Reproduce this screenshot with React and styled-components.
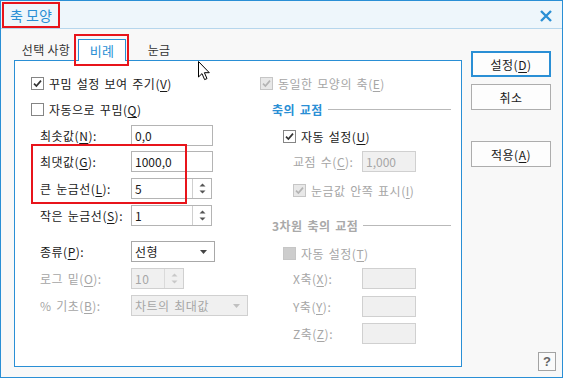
import styled, { createGlobalStyle } from 'styled-components';

const BLUE = '#2a8fd5';
const DIS = '#a6a6a6';

const GlobalStyle = createGlobalStyle`
  body {
    margin: 0;
    background: #ffffff;
  }
`;

function CheckMark({ color }) {
  return (
    <svg width="9" height="9" viewBox="0 0 9 9">
      <path d="M1 4.6 L3.4 7 L8 1.6" fill="none" stroke={color} strokeWidth="1.7" />
    </svg>
  );
}

function Check({ checked, disabled, indent, h, children }) {
  return (
    <Row $h={h} $indent={indent}>
      <Box $checked={checked} $disabled={disabled}>
        {checked && <CheckMark color={disabled ? '#b4b4b4' : '#333'} />}
      </Box>
      <CheckText $disabled={disabled}>{children}</CheckText>
    </Row>
  );
}

function Spinner({ disabled }) {
  const c = disabled ? '#c8c8c8' : '#555';
  return (
    <SpinButtons $disabled={disabled}>
      <svg width="7" height="4" viewBox="0 0 7 4">
        <path d="M0.5 3.5 L3.5 0.5 L6.5 3.5 Z" fill={c} />
      </svg>
      <svg width="7" height="4" viewBox="0 0 7 4">
        <path d="M0.5 0.5 L3.5 3.5 L6.5 0.5 Z" fill={c} />
      </svg>
    </SpinButtons>
  );
}

function DropArrow({ disabled }) {
  return (
    <svg width="7" height="4" viewBox="0 0 7 4">
      <path d="M0 0 L3.5 4 L7 0 Z" fill={disabled ? '#c0c0c0' : '#444'} />
    </svg>
  );
}

export default function App() {
  return (
    <>
      <GlobalStyle />
      <Window>
        <TitleBar>
          <Title>축 모양</Title>
          <svg width="12" height="12" viewBox="0 0 12 12">
            <path d="M1 1 L11 11 M11 1 L1 11" stroke={BLUE} strokeWidth="2.4" />
          </svg>
        </TitleBar>
        <Body>
          <LeftArea>
            <TabStrip>
              <Tab $w={64}>선택 사항</Tab>
              <Tab $w={48} $active>비례</Tab>
              <Tab $w={66}>눈금</Tab>
            </TabStrip>
            <Panel>
              <LeftCol>
                <Check checked h={27}>
                  꾸밈 설정 보여 주기(<u>V</u>)
                </Check>
                <Check h={25}>
                  자동으로 꾸밈(<u>Q</u>)
                </Check>
                <Row $h={26} $indent={9}>
                  <Label $w={91}>최솟값(<u>N</u>):</Label>
                  <TextBox $w={82}>0,0</TextBox>
                </Row>
                <Row $h={27} $indent={9}>
                  <Label $w={91}>최댓값(<u>G</u>):</Label>
                  <TextBox $w={82}>1000,0</TextBox>
                </Row>
                <Row $h={27} $indent={9}>
                  <Label $w={91}>큰 눈금선(<u>L</u>):</Label>
                  <SpinBox $w={81}>
                    <SpinText>5</SpinText>
                    <Spinner />
                  </SpinBox>
                </Row>
                <Row $h={27} $indent={9}>
                  <Label $w={91}>작은 눈금선(<u>S</u>):</Label>
                  <SpinBox $w={81}>
                    <SpinText>1</SpinText>
                    <Spinner />
                  </SpinBox>
                </Row>
                <Row $h={27} $indent={9} $gap={9}>
                  <Label $w={91}>종류(<u>P</u>):</Label>
                  <Select $w={84}>
                    <span>선형</span>
                    <DropArrow />
                  </Select>
                </Row>
                <Row $h={27} $indent={9}>
                  <Label $w={91} $disabled>로그 밑(<u>O</u>):</Label>
                  <SpinBox $w={53} $disabled>
                    <SpinText>10</SpinText>
                    <Spinner disabled />
                  </SpinBox>
                </Row>
                <Row $h={27} $indent={9}>
                  <Label $w={91} $disabled>% 기초(<u>B</u>):</Label>
                  <Select $w={117} $disabled>
                    <span>차트의 최대값</span>
                    <DropArrow disabled />
                  </Select>
                </Row>
              </LeftCol>
              <RightCol>
                <Check checked disabled h={27}>
                  동일한 모양의 축(<u>E</u>)
                </Check>
                <Section $h={25}>축의 교점</Section>
                <Check checked indent={23} h={28}>
                  자동 설정(<u>U</u>)
                </Check>
                <Row $h={22} $indent={33}>
                  <Label $w={69} $disabled>교점 수(<u>C</u>):</Label>
                  <TextBox $w={54} $disabled>1,000</TextBox>
                </Row>
                <Check checked disabled indent={33} h={36}>
                  눈금값 안쪽 표시(<u>I</u>)
                </Check>
                <Section $h={34} $disabled>3차원 축의 교점</Section>
                <Check disabled indent={23} h={22}>
                  자동 설정(<u>T</u>)
                </Check>
                <Row $h={29} $indent={33}>
                  <Label $w={69} $disabled>X축(<u>X</u>):</Label>
                  <TextBox $w={54} $disabled />
                </Row>
                <Row $h={27} $indent={33}>
                  <Label $w={69} $disabled>Y축(<u>Y</u>):</Label>
                  <TextBox $w={54} $disabled />
                </Row>
                <Row $h={27} $indent={33}>
                  <Label $w={69} $disabled>Z축(<u>Z</u>):</Label>
                  <TextBox $w={54} $disabled />
                </Row>
              </RightCol>
              <Highlight />
            </Panel>
          </LeftArea>
          <ButtonCol>
            <Button $default>설정(<u>D</u>)</Button>
            <Button>취소</Button>
            <Button $mt={31}>적용(<u>A</u>)</Button>
            <HelpButton>?</HelpButton>
          </ButtonCol>
        </Body>
        <Cursor width="13" height="20" viewBox="0 0 13 20">
          <path
            d="M0.5 0.5 L0.5 16 L4 12.6 L6.6 18.6 L9 17.6 L6.4 11.7 L11.3 11.7 Z"
            fill="#fff"
            stroke="#000"
            strokeWidth="1"
            strokeLinejoin="miter"
          />
        </Cursor>
      </Window>
    </>
  );
}

const Window = styled.div`
  position: relative;
  width: 563px;
  height: 378px;
  box-sizing: border-box;
  border: 1px solid ${BLUE};
  background: #f8f8f8;
  display: flex;
  flex-direction: column;
  font-family: 'Noto Sans CJK KR', 'Noto Sans', sans-serif;
  font-size: 12px;
  color: #1a1a1a;
  u {
    text-decoration-thickness: 1px;
    text-underline-offset: 2px;
  }
`;

const TitleBar = styled.div`
  height: 28px;
  flex: none;
  box-sizing: border-box;
  background: #eef6fb;
  border-bottom: 1px solid #b6d6ec;
  display: flex;
  align-items: flex-start;
  justify-content: space-between;
  padding: 1px 10px 0 1px;
  svg {
    margin-top: 8px;
  }
`;

const Title = styled.div`
  height: 26px;
  box-sizing: border-box;
  border: 2px solid #e8141b;
  padding: 0 6px;
  display: flex;
  align-items: center;
  color: ${BLUE};
  font-size: 14px;
`;

const Body = styled.div`
  flex: 1;
  display: flex;
  padding: 10px 0 0 13px;
`;

const LeftArea = styled.div`
  width: 448px;
  display: flex;
  flex-direction: column;
`;

const TabStrip = styled.div`
  height: 21px;
  display: flex;
  align-items: flex-end;
`;

const Tab = styled.div`
  position: relative;
  width: ${(p) => p.$w}px;
  height: ${(p) => (p.$active ? 22 : 21)}px;
  box-sizing: border-box;
  display: flex;
  align-items: center;
  justify-content: center;
  margin-bottom: ${(p) => (p.$active ? -1 : 0)}px;
  color: ${(p) => (p.$active ? BLUE : '#333')};
  font-size: ${(p) => (p.$active ? 13 : 12)}px;
  letter-spacing: 0.3px;
  background: ${(p) => (p.$active ? '#fff' : 'transparent')};
  border: ${(p) => (p.$active ? `1px solid ${BLUE}` : 'none')};
  border-bottom: none;
  z-index: ${(p) => (p.$active ? 1 : 0)};
  padding-bottom: 1px;
  &::after {
    content: '';
    display: ${(p) => (p.$active ? 'block' : 'none')};
    position: absolute;
    left: -5px;
    right: -4px;
    top: -6px;
    bottom: -5px;
    border: 2px solid #e8141b;
  }
`;

const Panel = styled.div`
  position: relative;
  height: 307px;
  box-sizing: border-box;
  background: #fff;
  border: 1px solid ${BLUE};
  display: flex;
  letter-spacing: 0.5px;
  word-spacing: 1.5px;
`;

const LeftCol = styled.div`
  width: 245px;
  box-sizing: border-box;
  padding: 9px 0 0 16px;
  display: flex;
  flex-direction: column;
`;

const RightCol = styled.div`
  flex: 1;
  padding: 9px 10px 0 0;
  display: flex;
  flex-direction: column;
`;

const Row = styled.div`
  height: ${(p) => p.$h}px;
  flex: none;
  display: flex;
  align-items: center;
  padding-left: ${(p) => p.$indent || 0}px;
  margin-top: ${(p) => p.$gap || 0}px;
`;

const Box = styled.span`
  width: 13px;
  height: 13px;
  box-sizing: border-box;
  flex: none;
  border: 1px solid ${(p) => (p.$disabled ? '#c6c6c6' : '#858585')};
  background: ${(p) =>
    p.$disabled ? (p.$checked ? '#e8e8e8' : '#cdcdcd') : '#fff'};
  display: flex;
  align-items: center;
  justify-content: center;
`;

const CheckText = styled.span`
  margin-left: 5px;
  white-space: nowrap;
  color: ${(p) => (p.$disabled ? DIS : '#1a1a1a')};
`;

const Label = styled.span`
  width: ${(p) => p.$w}px;
  flex: none;
  white-space: nowrap;
  color: ${(p) => (p.$disabled ? DIS : '#1a1a1a')};
`;

const TextBox = styled.div`
  width: ${(p) => p.$w}px;
  height: 21px;
  box-sizing: border-box;
  border: 1px solid ${(p) => (p.$disabled ? '#d0d0d0' : '#b4b4b4')};
  background: ${(p) => (p.$disabled ? '#f0f0f0' : '#fff')};
  color: ${(p) => (p.$disabled ? DIS : '#1a1a1a')};
  padding-left: 3px;
  letter-spacing: 0;
  display: flex;
  align-items: center;
`;

const SpinBox = styled.div`
  width: ${(p) => p.$w}px;
  height: 21px;
  box-sizing: border-box;
  border: 1px solid ${(p) => (p.$disabled ? '#d0d0d0' : '#b4b4b4')};
  background: ${(p) => (p.$disabled ? '#f0f0f0' : '#fff')};
  color: ${(p) => (p.$disabled ? DIS : '#1a1a1a')};
  display: flex;
`;

const SpinText = styled.span`
  flex: 1;
  padding-left: 3px;
  display: flex;
  align-items: center;
`;

const SpinButtons = styled.div`
  width: 18px;
  border-left: 1px solid ${(p) => (p.$disabled ? '#dadada' : '#cfcfcf')};
  display: flex;
  flex-direction: column;
  align-items: center;
  justify-content: space-around;
  padding: 2px 0;
`;

const Select = styled.div`
  width: ${(p) => p.$w}px;
  height: 21px;
  box-sizing: border-box;
  border: 1px solid ${(p) => (p.$disabled ? '#d0d0d0' : '#a8a8a8')};
  background: ${(p) => (p.$disabled ? '#f0f0f0' : '#fff')};
  color: ${(p) => (p.$disabled ? DIS : '#1a1a1a')};
  display: flex;
  align-items: center;
  justify-content: space-between;
  padding: 0 7px 0 3px;
`;

const Section = styled.div`
  height: ${(p) => p.$h}px;
  flex: none;
  display: flex;
  align-items: center;
  padding-left: 12px;
  font-weight: bold;
  white-space: nowrap;
  color: ${(p) => (p.$disabled ? '#a9a9a9' : BLUE)};
  &::after {
    content: '';
    flex: 1;
    height: 1px;
    margin-left: 5px;
    background: #b9b9b9;
  }
`;

const Highlight = styled.div`
  position: absolute;
  left: 16px;
  top: 83px;
  width: 156px;
  height: 60px;
  box-sizing: border-box;
  border: 2px solid #e8141b;
  pointer-events: none;
`;

const ButtonCol = styled.div`
  flex: 1;
  display: flex;
  flex-direction: column;
  padding: 12px 6px 6px 9px;
`;

const Button = styled.div`
  width: 80px;
  height: 26px;
  box-sizing: border-box;
  flex: none;
  margin-top: ${(p) => (p.$mt != null ? p.$mt : p.$default ? 0 : 7)}px;
  border: ${(p) => (p.$default ? `2px solid ${BLUE}` : '1px solid #adadad')};
  background: #fdfdfd;
  display: flex;
  align-items: center;
  justify-content: center;
  color: #1a1a1a;
  letter-spacing: 0.5px;
`;

const HelpButton = styled.div`
  margin-top: auto;
  align-self: flex-end;
  width: 18px;
  height: 19px;
  box-sizing: border-box;
  border: 1px solid #a3a3a3;
  background: #fafafa;
  display: flex;
  align-items: center;
  justify-content: center;
  font-family: 'Liberation Sans', Arial, sans-serif;
  font-weight: bold;
  font-size: 13px;
  color: #666;
`;

const Cursor = styled.svg`
  position: absolute;
  left: 197px;
  top: 60px;
`;
